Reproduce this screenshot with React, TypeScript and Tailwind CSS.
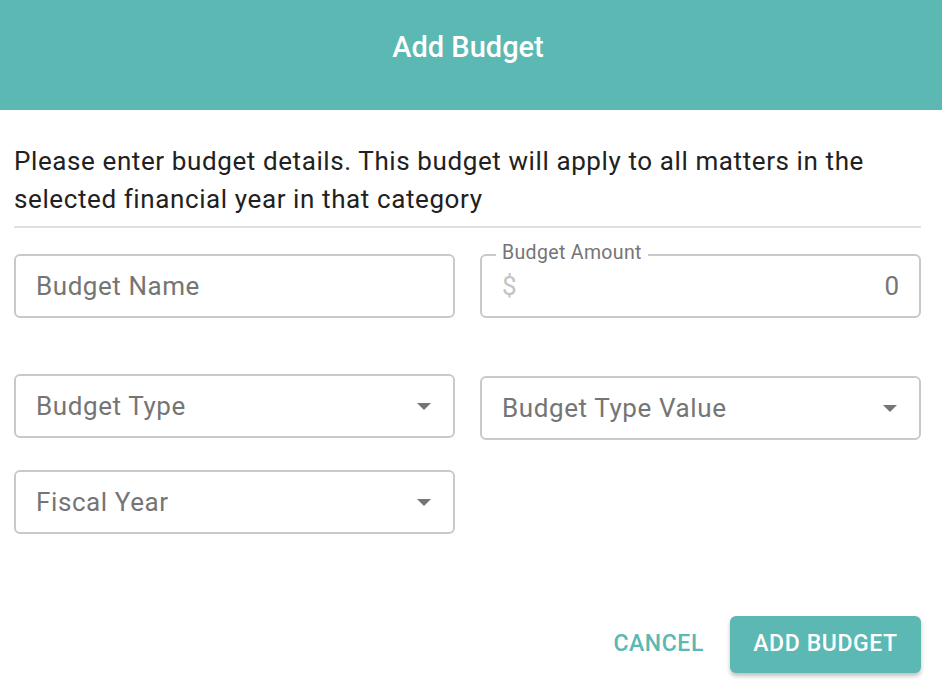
import React from 'react';

function Caret() {
  return (
    <svg width="14" height="7" viewBox="0 0 14 7" className="shrink-0">
      <path d="M0 0h14L7 7z" fill="#757575" />
    </svg>
  );
}

function TextBox({ placeholder }: { placeholder: string }) {
  return (
    <div className="h-[64px] rounded-[6px] border-2 border-[#c9c9c9] flex items-center px-[20px]">
      <span className="text-[26px] tracking-[0.55px] text-[#757575]">{placeholder}</span>
    </div>
  );
}

function SelectBox({ placeholder, className = '' }: { placeholder: string; className?: string }) {
  return (
    <div className={`h-[64px] rounded-[6px] border-2 border-[#c9c9c9] flex items-center justify-between pl-[20px] pr-[22px] ${className}`}>
      <span className="text-[26px] tracking-[0.6px] text-[#757575]">{placeholder}</span>
      <Caret />
    </div>
  );
}

function AmountBox() {
  return (
    <div className="relative h-[64px] rounded-[6px] border-2 border-[#c9c9c9] flex items-center justify-between px-[20px]">
      <span className="absolute -top-[18px] left-[14px] bg-white px-[6px] text-[19.5px] tracking-[0.35px] text-[#757575]">
        Budget Amount
      </span>
      <span className="text-[26px] text-[#c4c4c4]">$</span>
      <span className="text-[26px] text-[#757575]">0</span>
    </div>
  );
}

export default function App() {
  return (
    <div className="w-[942px] h-[694px] bg-white font-['Roboto',sans-serif] flex flex-col">
      <div className="h-[110px] bg-[#5bb8b2] flex items-center justify-center pb-[14px] pr-[6px]">
        <h1 className="text-[29px] font-medium text-white">Add Budget</h1>
      </div>

      <div className="pl-[14px] pr-[21px] flex flex-col flex-1">
        <p className="pt-[32px] text-[26px] leading-[38px] tracking-[0.6px] text-[#212121]">
          Please enter budget details. This budget will apply to all matters in the selected financial year in that category
        </p>
        <div className="mt-[8px] border-b-2 border-[#e0e0e0]" />

        <div className="mt-[26px] grid grid-cols-2 gap-x-[25px]">
          <TextBox placeholder="Budget Name" />
          <AmountBox />
        </div>

        <div className="mt-[56px] grid grid-cols-2 gap-x-[25px] items-start">
          <SelectBox placeholder="Budget Type" />
          <SelectBox placeholder="Budget Type Value" className="mt-[2px]" />
        </div>

        <div className="mt-[30px] grid grid-cols-2 gap-x-[25px]">
          <SelectBox placeholder="Fiscal Year" />
        </div>

        <div className="mt-[82px] flex items-center justify-end gap-[10px]">
          <button className="h-[57px] px-[16px] text-[23px] font-medium uppercase tracking-[0.6px] text-[#5bb8b2]">
            Cancel
          </button>
          <button className="h-[57px] w-[191px] rounded-[6px] bg-[#5bb8b2] text-[23px] font-medium uppercase tracking-[0.6px] text-white shadow-[0_3px_4px_rgba(0,0,0,0.25)]">
            Add Budget
          </button>
        </div>
      </div>
    </div>
  );
}
